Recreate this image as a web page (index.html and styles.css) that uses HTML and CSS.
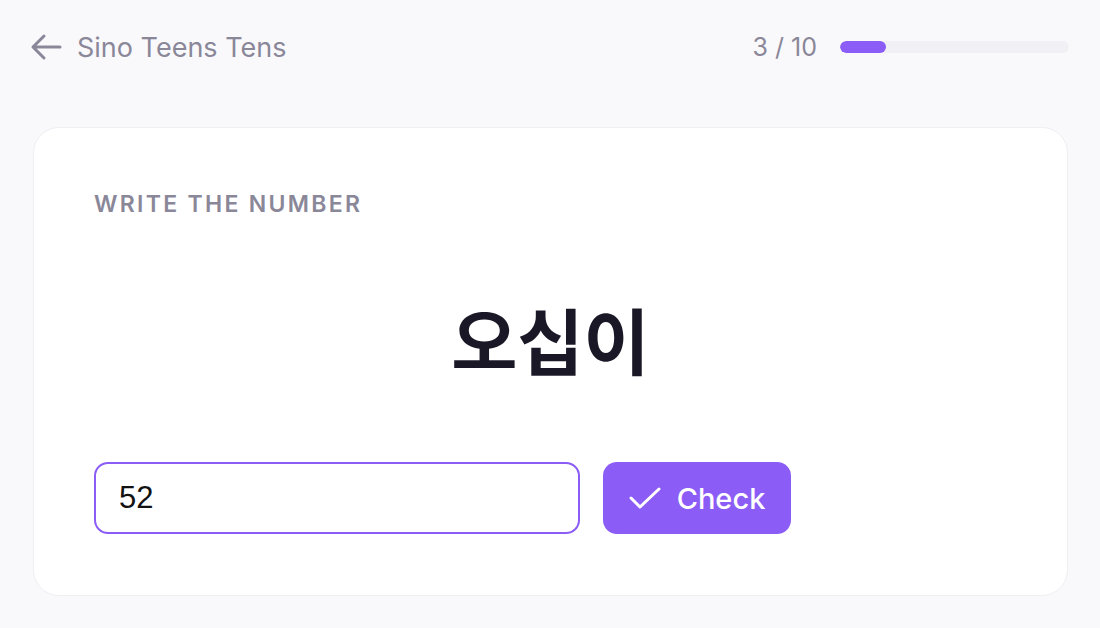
FILE: index.html
```html
<!DOCTYPE html>
<html lang="en">
<head>
<meta charset="utf-8">
<title>Sino Teens Tens</title>
<link rel="stylesheet" href="styles.css">
</head>
<body>
<header class="topbar">
  <a class="back" href="#">
    <svg class="back-icon" viewBox="0 0 32 28" width="32" height="28" aria-hidden="true">
      <path d="M30 14H3M14 3L3 14L14 25" fill="none" stroke="currentColor" stroke-width="3" stroke-linecap="round" stroke-linejoin="round"/>
    </svg>
    <span class="title">Sino Teens Tens</span>
  </a>
  <div class="progress">
    <span class="count">3 / 10</span>
    <div class="track"><div class="fill" style="width:20%"></div></div>
  </div>
</header>
<main class="card">
  <div class="label">WRITE THE NUMBER</div>
  <div class="word" lang="ko">오십이</div>
  <form class="answer" onsubmit="return false">
    <input class="field" type="text" value="52">
    <button class="check" type="submit">
      <svg class="check-icon" viewBox="0 0 32 24" width="32" height="24" aria-hidden="true">
        <path d="M2 12L11 21L30 3" fill="none" stroke="currentColor" stroke-width="3" stroke-linecap="round" stroke-linejoin="round"/>
      </svg>
      <span>Check</span>
    </button>
  </form>
</main>
</body>
</html>
```
FILE: styles.css
```css
html, body {
  margin: 0;
  padding: 0;
}
body {
  background: #f9f9fc;
  font-family: Inter, "Noto Sans", sans-serif;
  color: #1a1726;
  width: 1100px;
  height: 628px;
  overflow: hidden;
}
.topbar {
  display: flex;
  align-items: center;
  justify-content: space-between;
  height: 94px;
  padding: 0 31px 0 30px;
  box-sizing: border-box;
}
.back {
  display: flex;
  align-items: center;
  gap: 15px;
  color: #8a8799;
  text-decoration: none;
}
.back-icon {
  display: block;
}
.title {
  font-size: 27px;
  font-weight: 400;
  color: #8a8799;
}
.progress {
  display: flex;
  align-items: center;
  gap: 23px;
}
.count {
  font-size: 25px;
  color: #8a8799;
}
.track {
  width: 229px;
  height: 12px;
  border-radius: 6px;
  background: #f1f0f5;
  overflow: hidden;
}
.fill {
  height: 100%;
  border-radius: 6px;
  background: #8b5cf6;
}
.card {
  margin: 33px 32px 0 33px;
  background: #ffffff;
  border: 1px solid #efeff4;
  border-radius: 26px;
  padding: 62px 60px 60px 60px;
  height: 469px;
  box-sizing: border-box;
}
.label {
  font-size: 23px;
  font-weight: 600;
  letter-spacing: 0.1em;
  color: #8a8799;
  line-height: 28px;
}
.word {
  margin-top: 70px;
  text-align: center;
  font-family: "Noto Sans CJK KR", "Noto Sans", sans-serif;
  font-size: 72px;
  font-weight: 700;
  line-height: 100px;
  color: #1a1726;
}
.answer {
  display: flex;
  gap: 23px;
  margin-top: 74px;
}
.field {
  width: 486px;
  height: 72px;
  box-sizing: border-box;
  border: 2px solid #8b5cf6;
  border-radius: 14px;
  padding: 0 23px;
  font-family: "Liberation Sans", Arial, sans-serif;
  font-size: 31px;
  color: #111111;
  background: #ffffff;
  outline: none;
}
.check {
  display: flex;
  align-items: center;
  justify-content: center;
  gap: 16px;
  width: 188px;
  height: 72px;
  border: none;
  border-radius: 14px;
  background: #8b5cf6;
  color: #ffffff;
  font-family: Inter, "Noto Sans", sans-serif;
  font-size: 29px;
  font-weight: 500;
  cursor: pointer;
}
.check-icon {
  display: block;
}
```
